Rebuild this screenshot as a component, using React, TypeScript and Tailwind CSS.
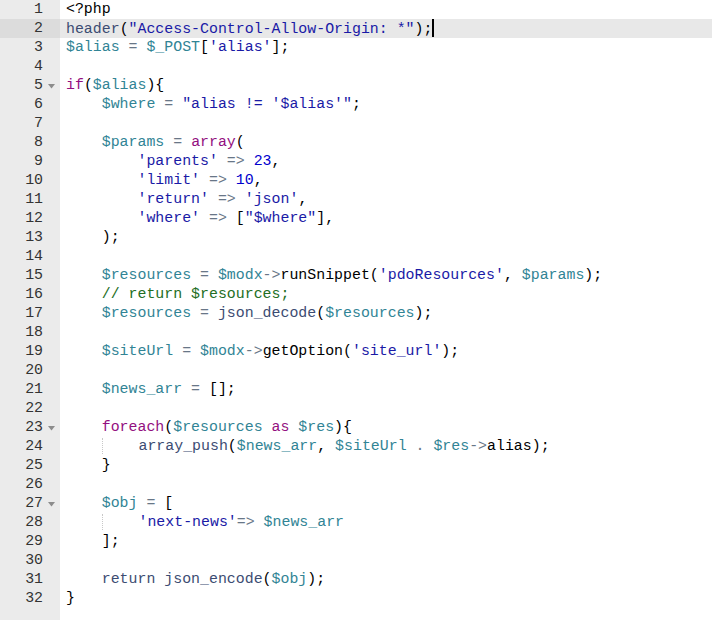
import React from "react";

type Tok = [string, string];

// token colours, close to the ace "chrome" theme
const C: Record<string, string> = {
  p: "text-black",
  v: "text-[#318495]",
  s: "text-[#1a1aa6]",
  k: "text-[#930f80]",
  c: "text-[#236e24]",
  n: "text-[#0000cd]",
  f: "text-[#3c4c72]",
  o: "text-[#687687]",
};

const lines: Tok[][] = [
  [["p", "<?php"]],
  [["f", "header"], ["p", "("], ["s", '"Access-Control-Allow-Origin: *"'], ["p", ");"]],
  [["v", "$alias"], ["o", " = "], ["v", "$_POST"], ["p", "["], ["s", "'alias'"], ["p", "];"]],
  [],
  [["k", "if"], ["p", "("], ["v", "$alias"], ["p", "){"]],
  [["p", "    "], ["v", "$where"], ["o", " = "], ["s", "\"alias != '$alias'\""], ["p", ";"]],
  [],
  [["p", "    "], ["v", "$params"], ["o", " = "], ["k", "array"], ["p", "("]],
  [["p", "        "], ["s", "'parents'"], ["o", " => "], ["n", "23"], ["p", ","]],
  [["p", "        "], ["s", "'limit'"], ["o", " => "], ["n", "10"], ["p", ","]],
  [["p", "        "], ["s", "'return'"], ["o", " => "], ["s", "'json'"], ["p", ","]],
  [["p", "        "], ["s", "'where'"], ["o", " => "], ["p", "["], ["s", '"$where"'], ["p", "],"]],
  [["p", "    );"]],
  [],
  [
    ["p", "    "],
    ["v", "$resources"],
    ["o", " = "],
    ["v", "$modx"],
    ["o", "->"],
    ["p", "runSnippet("],
    ["s", "'pdoResources'"],
    ["p", ", "],
    ["v", "$params"],
    ["p", ");"],
  ],
  [["p", "    "], ["c", "// return $resources;"]],
  [["p", "    "], ["v", "$resources"], ["o", " = "], ["f", "json_decode"], ["p", "("], ["v", "$resources"], ["p", ");"]],
  [],
  [
    ["p", "    "],
    ["v", "$siteUrl"],
    ["o", " = "],
    ["v", "$modx"],
    ["o", "->"],
    ["p", "getOption("],
    ["s", "'site_url'"],
    ["p", ");"],
  ],
  [],
  [["p", "    "], ["v", "$news_arr"], ["o", " = "], ["p", "[];"]],
  [],
  [["p", "    "], ["k", "foreach"], ["p", "("], ["v", "$resources"], ["p", " "], ["k", "as"], ["p", " "], ["v", "$res"], ["p", "){"]],
  [
    ["g", "    "],
    ["p", "    "],
    ["f", "array_push"],
    ["p", "("],
    ["v", "$news_arr"],
    ["p", ", "],
    ["v", "$siteUrl"],
    ["o", " . "],
    ["v", "$res"],
    ["o", "->"],
    ["p", "alias);"],
  ],
  [["p", "    }"]],
  [],
  [["p", "    "], ["v", "$obj"], ["o", " = "], ["p", "["]],
  [["g", "    "], ["p", "    "], ["s", "'next-news'"], ["o", "=>"], ["p", " "], ["v", "$news_arr"]],
  [["p", "    ];"]],
  [],
  [["p", "    "], ["f", "return"], ["p", " "], ["f", "json_encode"], ["p", "("], ["v", "$obj"], ["p", ");"]],
  [["p", "}"]],
];

const folds = [5, 23, 27];
const activeLine = 2;

const FoldArrow = () => (
  <svg width="7" height="5" viewBox="0 0 7 5" className="absolute right-[5px] top-[8px]">
    <path d="M0 0 H7 L3.5 4.5 Z" fill="#8c8c8c" />
  </svg>
);

export default function App() {
  return (
    <div
      className="flex h-[620px] w-[712px] bg-white text-[14.9px] leading-[19px]"
      style={{ fontFamily: '"Liberation Mono", "DejaVu Sans Mono", monospace' }}
    >
      <div className="w-[60px] shrink-0 bg-[#ebebeb] text-[#333]">
        {lines.map((_, i) => (
          <div
            key={i}
            className={`relative h-[19px] pr-[17px] text-right ${i + 1 === activeLine ? "bg-[#dcdcdc]" : ""}`}
          >
            {i + 1}
            {folds.includes(i + 1) && <FoldArrow />}
          </div>
        ))}
      </div>
      <div className="flex-1">
        {lines.map((toks, i) => (
          <div
            key={i}
            className={`relative h-[19px] whitespace-pre pl-[6px] ${i + 1 === activeLine ? "bg-[#e8e8e8]" : ""}`}
          >
            {toks.map(([t, s], j) =>
              t === "g" ? (
                <span key={j} className="border-r border-dotted border-[#c8c8c8]">
                  {s}
                </span>
              ) : (
                <span key={j} className={C[t]}>
                  {s}
                </span>
              )
            )}
            {i + 1 === activeLine && <span className="inline-block h-[18px] w-[2px] -mb-[4px] bg-black" />}
          </div>
        ))}
      </div>
    </div>
  );
}
